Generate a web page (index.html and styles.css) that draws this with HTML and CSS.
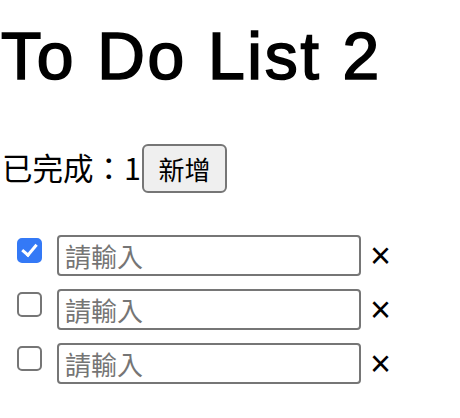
FILE: index.html
```html
<!DOCTYPE html>
<html lang="zh-Hant">
<head>
<meta charset="utf-8">
<title>To Do List 2</title>
<link rel="stylesheet" href="styles.css">
</head>
<body>
<h1 class="title">To Do List 2</h1>
<div class="summary"><span class="done">已完成：1</span><button class="add">新增</button></div>
<ul class="list">
  <li class="item"><input class="check" type="checkbox" checked><input class="field" type="text" placeholder="請輸入"><span class="del">×</span></li>
  <li class="item"><input class="check" type="checkbox"><input class="field" type="text" placeholder="請輸入"><span class="del">×</span></li>
  <li class="item"><input class="check" type="checkbox"><input class="field" type="text" placeholder="請輸入"><span class="del">×</span></li>
</ul>
</body>
</html>
```
FILE: styles.css
```css
html, body {
  margin: 0;
  padding: 0;
  background: #fff;
}
body {
  font-family: "Liberation Sans", "Noto Sans CJK TC", sans-serif;
  color: #000;
}
.title {
  margin: 18px 0 0 1px;
  font-size: 66px;
  line-height: 76px;
  font-weight: normal;
  letter-spacing: 2.7px;
  -webkit-text-stroke: 1.7px #000;
}
.summary {
  display: flex;
  align-items: center;
  margin-top: 50px;
  font-family: "Noto Sans CJK TC", sans-serif;
  font-size: 30.5px;
  padding-left: 2px;
}
.done {
  position: relative;
  top: -2px;
}
.add {
  margin-left: 1px;
  height: 49px;
  width: 85px;
  padding: 0;
  font-family: "Noto Sans CJK TC", sans-serif;
  font-size: 26px;
  color: #000;
  background: #efefef;
  border: 2px solid #767676;
  border-radius: 6px;
}
.list {
  list-style: none;
  margin: 42px 0 0;
  padding: 0;
  display: flex;
  flex-direction: column;
  gap: 13px;
}
.item {
  display: flex;
  align-items: flex-start;
  height: 41px;
}
.check {
  appearance: none;
  -webkit-appearance: none;
  margin: 3px 0 0 17px;
  width: 25px;
  height: 25px;
  box-sizing: border-box;
  border: 2px solid #767676;
  border-radius: 5px;
  background: #fff;
  position: relative;
}
.check:checked {
  background: #3479f6;
  border-color: #3479f6;
}
.check:checked::after {
  content: "";
  position: absolute;
  left: 6px;
  top: 1px;
  width: 6px;
  height: 12px;
  border-right: 3.5px solid #fff;
  border-bottom: 3.5px solid #fff;
  transform: rotate(40deg);
}
.field {
  margin: 0 0 0 15px;
  box-sizing: border-box;
  width: 304px;
  height: 41px;
  padding: 0 6px;
  border: 2px solid #767676;
  border-radius: 4px;
  font-family: "Noto Sans CJK TC", sans-serif;
  font-size: 26px;
  color: #000;
  background: #fff;
}
.field::placeholder {
  color: #757575;
}
.del {
  align-self: center;
  margin-left: 9px;
  font-family: "Liberation Sans", sans-serif;
  font-size: 36px;
  line-height: 36px;
}
```
